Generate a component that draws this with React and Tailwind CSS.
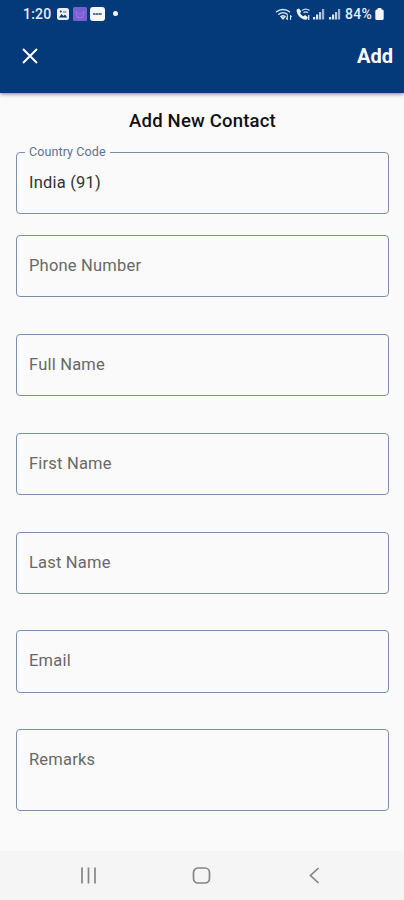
import clsx from 'clsx'

const fields = [
  { label: 'Country Code', value: 'India (91)', box: 'h-[62px] mb-[21px]' },
  { label: 'Phone Number', box: 'h-[62px] mb-[37px]' },
  { label: 'Full Name', box: 'h-[62px] mb-[37px]' },
  { label: 'First Name', box: 'h-[62px] mb-[37px]' },
  { label: 'Last Name', box: 'h-[62px] mb-9' },
  { label: 'Email', box: 'h-[63px] mb-9' },
  { label: 'Remarks', box: 'h-[82px]' },
]

function SignalIcon() {
  return (
    <svg width="12" height="12" viewBox="0 0 12 12" fill="#dde6f2">
      <rect x="0" y="9" width="2.2" height="2.5" />
      <rect x="3" y="6.5" width="2.2" height="5" />
      <rect x="6" y="4" width="2.2" height="7.5" opacity=".85" />
      <rect x="9" y="1" width="2.2" height="10.5" opacity=".7" />
    </svg>
  )
}

function StatusBar() {
  return (
    <div className="h-[27px] pl-[23px] pr-5 flex items-center justify-between text-[#e6edf6]">
      <div className="flex items-center">
        <span className="w-[34px] text-[14px] font-medium tracking-[0.2px] leading-none">1:20</span>
        <svg width="12" height="12" viewBox="0 0 12 12">
          <rect width="12" height="12" rx="2.5" fill="#edf1f7" />
          <path d="M2 9.5 4.5 6l2 2L8 6.5l2.2 3z" fill="#043a7a" />
          <circle cx="3.8" cy="3.6" r="1" fill="#043a7a" />
          <path d="M6 3h3.5v2H6z" fill="#9bb0cb" />
        </svg>
        <svg className="ml-[4px]" width="14" height="14" viewBox="0 0 14 14">
          <rect width="14" height="14" rx="1.5" fill="#7a5fd3" />
          <path d="M3.5 4v3.5a3.5 3.5 0 0 0 7 0V4M5.5 6 7 7.5l2-2M4 10.5l2-1" fill="none" stroke="#967be2" />
        </svg>
        <svg className="ml-[3px]" width="15" height="14" viewBox="0 0 15 14">
          <rect width="15" height="14" rx="3" fill="#f4f7fb" />
          <path d="M3 7h9" stroke="#58718f" strokeWidth="1.8" strokeDasharray="2.6 .4" />
        </svg>
        <span className="ml-[8px] w-[5px] h-[5px] rounded-full bg-[#f1f5fa]" />
      </div>
      <div className="flex items-center">
        <svg width="18" height="14" viewBox="0 0 18 14" fill="none" stroke="#dde6f2" strokeWidth="1.5" strokeLinecap="round">
          <path d="M1.5 4.8a10 10 0 0 1 13 0" />
          <path d="M3.8 7.3a6.5 6.5 0 0 1 8.4 0" />
          <path d="M6 9.5a3.4 3.4 0 0 1 4 0L8 11.8z" />
          <path d="M12.3 8.5v4M11.3 11.2l1 1.3M15.5 12.5v-4M16.4 9.6l-.9-1.1" strokeWidth="1.1" />
        </svg>
        <svg className="ml-[3px] mr-[2px]" width="15" height="14" viewBox="0 0 15 14">
          <path d="M.6 2.5 3 1.4l2.3 3L4.1 5.9c.7 1.6 1.9 2.7 3.5 3.4L9 8.1l2.9 2.1-1 2.4C5.3 13.2.4 8.2.6 2.5z" fill="#eaf0f8" />
          <path d="M6 3.6a6 6 0 0 1 7.5 0M7.5 5.8a3.5 3.5 0 0 1 4.5 0" fill="none" stroke="#cfdbea" strokeWidth="1.3" />
          <path d="M12.7 8v5" stroke="#cfdbea" strokeWidth="1.4" />
        </svg>
        <SignalIcon />
        <span className="w-[4px]" />
        <SignalIcon />
        <span className="ml-[4px] w-[28px] whitespace-nowrap text-[14px] tracking-[0.3px] font-medium leading-none">84%</span>
        <svg className="ml-[2px]" width="9" height="12" viewBox="0 0 9 12" fill="#f4f7fb">
          <rect x="2.5" width="4" height="3" rx=".8" />
          <rect x=".3" y="1.5" width="8.4" height="10.5" rx="1.5" />
        </svg>
      </div>
    </div>
  )
}

function Header() {
  return (
    <header className="relative h-[93px] bg-[#043a7a] shadow-[0_1px_4px_rgba(0,0,0,0.5)]">
      <StatusBar />
      <div className="h-[57px] pl-[22px] pr-[11px] flex items-center justify-between text-white">
        <button aria-label="Close">
          <svg width="16" height="16" viewBox="0 0 16 16" fill="none" stroke="currentColor" strokeWidth="2">
            <path d="M1 1l14 14M15 1L1 15" />
          </svg>
        </button>
        <button className="text-[20px] font-bold leading-none">Add</button>
      </div>
    </header>
  )
}

function Field({ label, value, box }) {
  return (
    <div className={clsx('relative border border-[#7b8fad] rounded-[4px] pl-3 pt-[18px]', box)}>
      {value && (
        <span className="absolute -top-[8px] left-2 px-1 bg-[#fafafa] text-[12.5px] leading-[14px] tracking-[0.1px] text-[#5a7299] whitespace-nowrap">
          {label}
        </span>
      )}
      <p className={clsx('text-[16.5px] leading-6 tracking-[0.2px]', value ? 'text-[#333333]' : 'text-[#686868]')}>
        {value || label}
      </p>
    </div>
  )
}

function NavBar() {
  return (
    <nav className="h-[49px] bg-[#f5f5f5] flex items-center pl-[80px] text-[#858585]">
      <svg width="17" height="17" viewBox="0 0 17 17" fill="none" stroke="currentColor" strokeWidth="1.7">
        <path d="M2 .5v16M8.5 .5v16M15 .5v16" />
      </svg>
      <svg className="ml-[95px]" width="19" height="17" viewBox="0 0 19 17" fill="none" stroke="currentColor" strokeWidth="1.7">
        <rect x="1.5" y="1" width="16" height="15" rx="4.5" />
      </svg>
      <svg className="ml-[98px]" width="11" height="17" viewBox="0 0 11 17" fill="none" stroke="currentColor" strokeWidth="1.7">
        <path d="M9.5 1l-8 7.5 8 7.5" />
      </svg>
    </nav>
  )
}

export default function App() {
  return (
    <div className="w-[404px] h-[900px] flex flex-col overflow-hidden bg-[#fafafa] font-[Roboto,sans-serif]">
      <Header />
      <main className="flex-1 pl-4 pr-[15px] pt-[17px]">
        <h1 className="h-[42px] text-center text-[18.5px] leading-[22px] font-medium tracking-[0.2px] text-[#111111]">
          Add New Contact
        </h1>
        {fields.map((f) => (
          <Field key={f.label} {...f} />
        ))}
      </main>
      <NavBar />
    </div>
  )
}
